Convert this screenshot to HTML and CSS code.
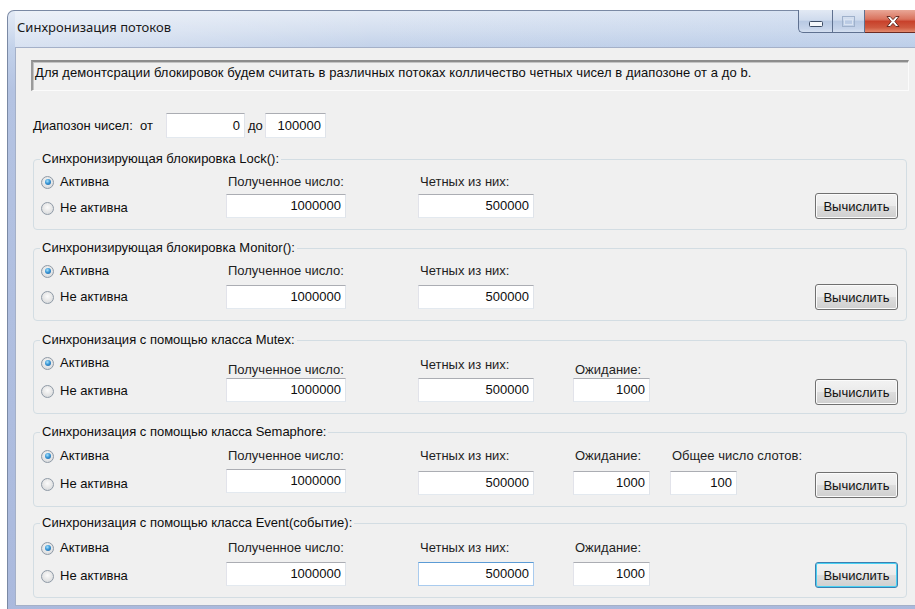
FILE: index.html
```html
<!DOCTYPE html>
<html lang="ru">
<head>
<meta charset="utf-8">
<title>Синхронизация потоков</title>
<link rel="stylesheet" href="styles.css">
</head>
<body>
<div class="window">
  <div class="titlebar">
    <span class="title">Синхронизация потоков</span>
    <div class="caps">
      <div class="cap cap-min">
        <svg width="14" height="6" viewBox="0 0 14 6"><rect x="0.5" y="0.5" width="13" height="5" rx="1" fill="#f4f7fb" stroke="#3d4d66"/></svg>
      </div>
      <div class="cap cap-max">
        <svg width="13" height="11" viewBox="0 0 13 11"><rect x="0.5" y="0.5" width="12" height="10" fill="none" stroke="#9fb1cb"/><rect x="2.5" y="3.5" width="8" height="5" fill="none" stroke="#d9e3f1"/></svg>
      </div>
      <div class="cap cap-close">
        <svg width="16" height="13" viewBox="0 0 16 13"><path d="M2 1.5h3.2l2.8 3.1 2.8-3.1H14L9.9 6.5 14 11.5h-3.2L8 8.4 5.2 11.5H2l4.1-5z" fill="#ffffff" stroke="#5a1f16" stroke-width="0.9" stroke-linejoin="round"/></svg>
      </div>
    </div>
  </div>

  <div class="client">
    <div class="info">Для демонтсрации блокировок будем считать в различных потоках колличество четных чисел в диапозоне от a до b.</div>

    <div class="range">
      <span class="range-label">Диапозон чисел:&nbsp; от</span>
      <div class="tb tb-from">0</div>
      <span class="range-to">до</span>
      <div class="tb tb-to">100000</div>
    </div>

    <fieldset class="group g-lock">
      <legend>Синхронизирующая блокировка Lock():</legend>
      <div class="gbody">
        <div class="radios">
          <div class="radio"><span class="dot on"></span>Активна</div>
          <div class="radio"><span class="dot"></span>Не активна</div>
        </div>
        <div class="field f-got"><span class="lbl">Полученное число:</span><div class="tb">1000000</div></div>
        <div class="field f-even"><span class="lbl">Четных из них:</span><div class="tb">500000</div></div>
        <button class="calc">Вычислить</button>
      </div>
    </fieldset>

    <fieldset class="group g-monitor">
      <legend>Синхронизирующая блокировка Monitor():</legend>
      <div class="gbody">
        <div class="radios">
          <div class="radio"><span class="dot on"></span>Активна</div>
          <div class="radio"><span class="dot"></span>Не активна</div>
        </div>
        <div class="field f-got"><span class="lbl">Полученное число:</span><div class="tb">1000000</div></div>
        <div class="field f-even"><span class="lbl">Четных из них:</span><div class="tb">500000</div></div>
        <button class="calc">Вычислить</button>
      </div>
    </fieldset>

    <fieldset class="group g-mutex">
      <legend>Синхронизация с помощью класса Mutex:</legend>
      <div class="gbody">
        <div class="radios">
          <div class="radio"><span class="dot on"></span>Активна</div>
          <div class="radio"><span class="dot"></span>Не активна</div>
        </div>
        <div class="field f-got"><span class="lbl">Полученное число:</span><div class="tb">1000000</div></div>
        <div class="field f-even raised"><span class="lbl">Четных из них:</span><div class="tb">500000</div></div>
        <div class="field f-wait"><span class="lbl">Ожидание:</span><div class="tb">1000</div></div>
        <button class="calc">Вычислить</button>
      </div>
    </fieldset>

    <fieldset class="group g-sem">
      <legend>Синхронизация с помощью класса Semaphore:</legend>
      <div class="gbody">
        <div class="radios">
          <div class="radio"><span class="dot on"></span>Активна</div>
          <div class="radio"><span class="dot"></span>Не активна</div>
        </div>
        <div class="field f-got"><span class="lbl">Полученное число:</span><div class="tb">1000000</div></div>
        <div class="field f-even low"><span class="lbl">Четных из них:</span><div class="tb">500000</div></div>
        <div class="field f-wait low"><span class="lbl">Ожидание:</span><div class="tb">1000</div></div>
        <div class="field f-slots low"><span class="lbl">Общее число слотов:</span><div class="tb">100</div></div>
        <button class="calc">Вычислить</button>
      </div>
    </fieldset>

    <fieldset class="group g-event">
      <legend>Синхронизация с помощью класса Event(событие):</legend>
      <div class="gbody">
        <div class="radios">
          <div class="radio"><span class="dot on"></span>Активна</div>
          <div class="radio"><span class="dot"></span>Не активна</div>
        </div>
        <div class="field f-got"><span class="lbl">Полученное число:</span><div class="tb">1000000</div></div>
        <div class="field f-even"><span class="lbl">Четных из них:</span><div class="tb focus">500000</div></div>
        <div class="field f-wait"><span class="lbl">Ожидание:</span><div class="tb">1000</div></div>
        <button class="calc default">Вычислить</button>
      </div>
    </fieldset>
  </div>
</div>
</body>
</html>
```

FILE: styles.css
```css
* {
  box-sizing: border-box;
}

html,
body {
  margin: 0;
  padding: 0;
  background: #ffffff;
  overflow: hidden;
}

body {
  padding: 10px 0 0 7px;
  font-family: "Liberation Sans", Arial, sans-serif;
  font-size: 13px;
  color: #0d0d0d;
}

/* ---------- window frame ---------- */
.window {
  width: 922px;
  height: 620px;
  border: 1px solid #7a89a4;
  border-bottom: none;
  border-radius: 7px 7px 0 0;
  background: linear-gradient(180deg, #e3eaf5 0, #d3deef 20px, #c3d2ea 36px, #b4c3e2 80px, #aab9dd 100%);
  padding: 0 7px;
  display: flex;
  flex-direction: column;
}

.titlebar {
  height: 36px;
  display: flex;
  align-items: flex-start;
  flex: none;
  background: linear-gradient(90deg, rgba(255, 255, 255, 0.35) 0, rgba(255, 255, 255, 0) 40%, rgba(170, 195, 230, 0.25) 100%);
}

.title {
  font-family: "Noto Sans", "Open Sans", sans-serif;
  font-size: 13px;
  line-height: 18px;
  margin: 7px 0 0 2px;
  color: #1a1a1a;
}

.caps {
  margin-left: auto;
  margin-top: -1px;
  display: flex;
  height: 23px;
}

.cap {
  display: flex;
  align-items: center;
  justify-content: center;
  height: 23px;
  border: 1px solid #5f7190;
  border-top: none;
}

.cap-min {
  width: 34px;
  border-radius: 0 0 0 5px;
  border-right: none;
  padding-top: 5px;
  background: linear-gradient(180deg, #e2e9f4 0, #cfdbed 45%, #b8c9e3 52%, #c6d4ea 85%, #d6e1f1 100%);
}

.cap-max {
  width: 33px;
  background: linear-gradient(180deg, #e2e9f4 0, #cfdbed 45%, #b8c9e3 52%, #c6d4ea 85%, #d6e1f1 100%);
}

.cap-close {
  width: 56px;
  border-left: none;
  border-color: #6b2a22;
  border-radius: 0 0 5px 0;
  background: linear-gradient(180deg, #e9a797 0, #d9725d 42%, #c8412b 52%, #cf5a40 80%, #e48b6e 100%);
}

/* ---------- client area ---------- */
.client {
  flex: none;
  height: 559px;
  background: #f0f0f0;
  border: 1px solid #a4b0c8;
  padding: 12px 0 0 15px;
}

.info {
  width: 878px;
  height: 31px;
  border-style: solid;
  border-width: 2px 1px 1px 2px;
  border-color: #8d8d8d #fbfbfb #fbfbfb #9a9a9a;
  box-shadow: inset 1px 1px 0 #c4c4c4;
  padding: 3px 0 0 2px;
  line-height: 15px;
  letter-spacing: 0.08px;
  white-space: nowrap;
}

.range {
  display: flex;
  align-items: center;
  margin: 22px 0 0 2px;
  height: 25px;
}

.range-label {
  width: 133px;
}

.range-to {
  width: 20px;
  padding-left: 3px;
}

.tb {
  height: 24px;
  background: #ffffff;
  border: 1px solid;
  border-color: #abadb3 #dfe3e9 #e3e9ef #e2e3ea;
  text-align: right;
  padding-right: 4px;
  line-height: 22px;
  white-space: nowrap;
}

.range .tb {
  height: 25px;
  line-height: 23px;
}

.tb-from {
  width: 79px;
}

.tb-to {
  width: 61px;
}

.tb.focus {
  border-color: #5b9bd5 #a9cbee #a9cbee #a9cbee;
}

/* ---------- group boxes ---------- */
.group {
  width: 874px;
  margin: 11px 0 0 2px;
  padding: 0 8px 11px 7px;
  border: 1px solid #d3dde3;
  border-radius: 4px;
  min-inline-size: 0;
}

.group legend {
  padding: 0 2px;
  margin-left: -1px;
  line-height: 14px;
}

.g-lock {
  margin-top: 14px;
}

.g-mutex {
  margin-top: 12px;
}

.g-event {
  margin-top: 9px;
}

.gbody {
  display: flex;
  align-items: flex-start;
  padding-top: 9px;
}

.radios {
  width: 185px;
  display: flex;
  flex-direction: column;
  gap: 12px;
}

.radio {
  display: flex;
  align-items: center;
  gap: 6px;
  height: 14px;
  line-height: 14px;
}

.dot {
  width: 13px;
  height: 13px;
  border-radius: 50%;
  border: 1px solid #8f9aa6;
  background: radial-gradient(circle at 50% 40%, #fbfbfb 0, #e9e9e9 45%, #cfd3d7 100%);
  position: relative;
  flex: none;
}

.dot.on::after {
  content: "";
  position: absolute;
  left: 2.5px;
  top: 2.5px;
  width: 6px;
  height: 6px;
  border-radius: 50%;
  background: radial-gradient(circle at 40% 35%, #a9e2fb 0, #3a97d6 45%, #1b5a9a 100%);
}

.field {
  display: flex;
  flex-direction: column;
  gap: 5px;
}

.lbl {
  padding-left: 2px;
  line-height: 14px;
  color: #1e1e1e;
}

.f-got {
  width: 192px;
}

.f-got .tb {
  width: 120px;
}

.f-even {
  width: 155px;
}

.f-even .tb {
  width: 116px;
}

.f-wait {
  width: 97px;
}

.f-wait .tb {
  width: 77px;
}

.f-slots .tb {
  width: 67px;
}

.calc {
  margin-left: auto;
  align-self: flex-end;
  margin-bottom: -1px;
  width: 83px;
  height: 26px;
  font: inherit;
  font-size: 13px;
  color: #111;
  border: 1px solid #707070;
  border-radius: 3px;
  background: linear-gradient(180deg, #f2f2f2 0, #ebebeb 48%, #dddddd 52%, #cfcfcf 100%);
  box-shadow: inset 0 0 0 1px #fbfbfb;
  padding: 0;
}

.calc.default {
  border-color: #3c7fb1;
  box-shadow: inset 0 0 0 1px #48d1f3;
}

/* per-group vertical tweaks */
.g-monitor .field {
  gap: 7px;
}

.g-mutex .radios,
.g-sem .radios,
.g-event .radios {
  gap: 14px;
}

.g-mutex .field {
  padding-top: 7px;
  gap: 1px;
}

.g-mutex .field.raised {
  padding-top: 2px;
  gap: 6px;
}

.g-mutex .calc,
.g-sem .calc {
  margin-bottom: -3px;
}

.g-sem .gbody {
  padding-top: 10px;
}

.g-sem .field {
  gap: 6px;
}

.g-sem .field.low {
  gap: 8px;
}

.g-event .gbody {
  padding-top: 11px;
}

.g-event .field {
  gap: 7px;
}

.g-event .calc {
  margin-bottom: -2px;
}
```
